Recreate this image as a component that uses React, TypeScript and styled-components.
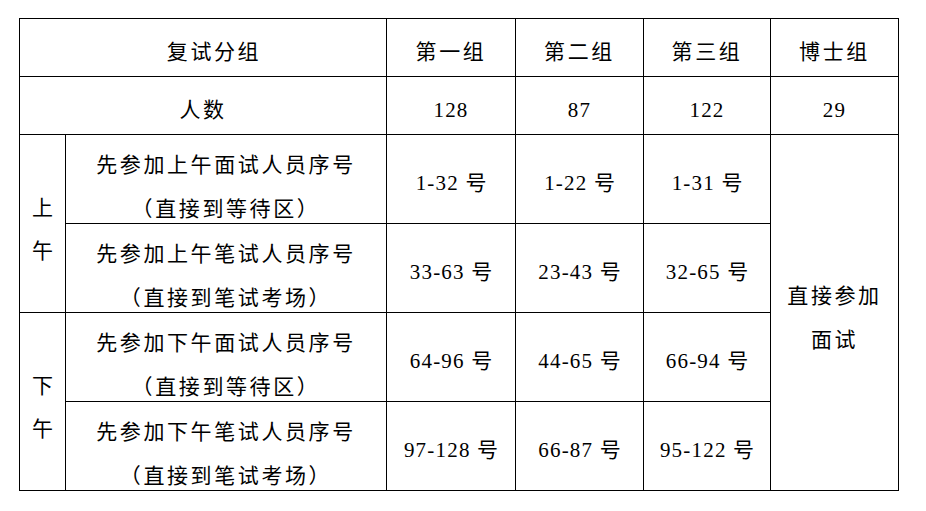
import React from 'react';
import styled, { createGlobalStyle } from 'styled-components';

const GlobalStyle = createGlobalStyle`
  html, body {
    margin: 0;
    padding: 0;
    background: #ffffff;
  }
  body {
    font-family: 'Liberation Serif', 'Noto Sans CJK SC', serif;
    color: #000000;
  }
`;

const Page = styled.div`
  padding: 18px 0 0 19px;
`;

const Table = styled.table`
  border-collapse: collapse;
  table-layout: fixed;
  width: 880px;
  font-size: 21px;
`;

const Row = styled.tr<{ $h: number }>`
  height: ${({ $h }) => $h}px;
`;

const Cell = styled.td<{ $indent?: number }>`
  border: 1px solid #000000;
  padding: 8px 0 0 ${({ $indent }) => $indent ?? 0}px;
  text-align: center;
  vertical-align: middle;
  line-height: 44px;
  white-space: nowrap;
`;

/* multi-line content: keeps the same downward nudge without growing the row */
const Lines = styled.div<{ $lh?: number; $lift?: number }>`
  display: block;
  margin-bottom: ${({ $lift }) => -8 + ($lift ?? 0) * 2}px;
  line-height: ${({ $lh }) => $lh ?? 44}px;
`;

const Label = styled.span`
  letter-spacing: 2.6px;
`;

const Num = styled.span`
  letter-spacing: 1.2px;
`;

type Session = {
  label: string;
  slots: { kind: string; place: string; ranges: string[] }[];
};

const groups = ['第一组', '第二组', '第三组'];
const counts = ['128', '87', '122'];

const sessions: Session[] = [
  {
    label: '上午',
    slots: [
      { kind: '先参加上午面试人员序号', place: '（直接到等待区）', ranges: ['1-32', '1-22', '1-31'] },
      { kind: '先参加上午笔试人员序号', place: '（直接到笔试考场）', ranges: ['33-63', '23-43', '32-65'] }
    ]
  },
  {
    label: '下午',
    slots: [
      { kind: '先参加下午面试人员序号', place: '（直接到等待区）', ranges: ['64-96', '44-65', '66-94'] },
      { kind: '先参加下午笔试人员序号', place: '（直接到笔试考场）', ranges: ['97-128', '66-87', '95-122'] }
    ]
  }
];

const App: React.FC = () => (
  <Page>
    <GlobalStyle />
    <Table>
      <colgroup>
        <col style={{ width: 46 }} />
        <col style={{ width: 321 }} />
        <col style={{ width: 129 }} />
        <col style={{ width: 128 }} />
        <col style={{ width: 127 }} />
        <col style={{ width: 128 }} />
      </colgroup>
      <tbody>
        <Row $h={58}>
          <Cell colSpan={2} $indent={22}>
            <Label>复试分组</Label>
          </Cell>
          {groups.map((g) => (
            <Cell key={g}>
              <Label>{g}</Label>
            </Cell>
          ))}
          <Cell>
            <Label>博士组</Label>
          </Cell>
        </Row>
        <Row $h={58}>
          <Cell colSpan={2}>
            <Label>人数</Label>
          </Cell>
          {counts.map((c) => (
            <Cell key={c}>
              <Num>{c}</Num>
            </Cell>
          ))}
          <Cell>
            <Num>29</Num>
          </Cell>
        </Row>
        {sessions.map((s, si) =>
          s.slots.map((slot, i) => (
            <Row $h={89} key={`${si}-${i}`}>
              {i === 0 && (
                <Cell rowSpan={2}>
                  <Lines $lh={43} $lift={2}>
                    {s.label[0]}
                    <br />
                    {s.label[1]}
                  </Lines>
                </Cell>
              )}
              <Cell>
                <Lines>
                  <Label>{slot.kind}</Label>
                  <br />
                  <Label>{slot.place}</Label>
                </Lines>
              </Cell>
              {slot.ranges.map((r) => (
                <Cell key={r}>
                  <Num>{r} </Num>号
                </Cell>
              ))}
              {si === 0 && i === 0 && (
                <Cell rowSpan={4}>
                  <Lines $lift={3}>
                    <Label>直接参加</Label>
                    <br />
                    <Label>面试</Label>
                  </Lines>
                </Cell>
              )}
            </Row>
          ))
        )}
      </tbody>
    </Table>
  </Page>
);

export default App;
